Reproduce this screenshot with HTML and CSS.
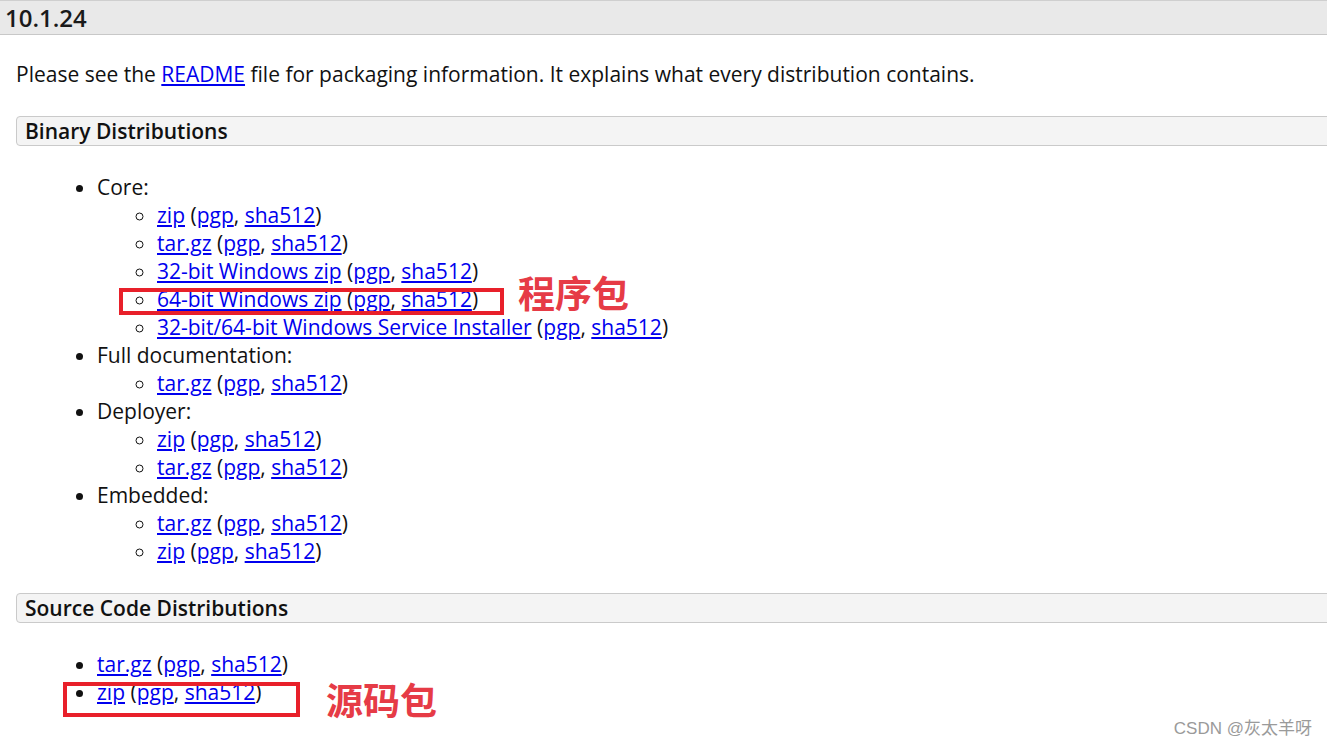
FILE: index.html
```html
<!DOCTYPE html>
<html lang="en">
<head>
    <meta charset="UTF-8">
    <title>Tomcat 10.1.24</title>
    <link rel="stylesheet" href="styles.css">
</head>
<body>
    <h2 class="version">10.1.24</h2>

    <div class="page">
        <p class="intro">Please see the <a href="#">README</a> file for packaging information. It explains what every distribution contains.</p>

        <h3 class="box">Binary Distributions</h3>
        <ul class="dist">
            <li>Core:
                <ul>
                    <li><a href="#">zip</a> (<a href="#">pgp</a>, <a href="#">sha512</a>)</li>
                    <li><a href="#">tar.gz</a> (<a href="#">pgp</a>, <a href="#">sha512</a>)</li>
                    <li><a href="#">32-bit Windows zip</a> (<a href="#">pgp</a>, <a href="#">sha512</a>)</li>
                    <li><a href="#">64-bit Windows zip</a> (<a href="#">pgp</a>, <a href="#">sha512</a>)</li>
                    <li><a href="#">32-bit/64-bit Windows Service Installer</a> (<a href="#">pgp</a>, <a href="#">sha512</a>)</li>
                </ul>
            </li>
            <li>Full documentation:
                <ul>
                    <li><a href="#">tar.gz</a> (<a href="#">pgp</a>, <a href="#">sha512</a>)</li>
                </ul>
            </li>
            <li>Deployer:
                <ul>
                    <li><a href="#">zip</a> (<a href="#">pgp</a>, <a href="#">sha512</a>)</li>
                    <li><a href="#">tar.gz</a> (<a href="#">pgp</a>, <a href="#">sha512</a>)</li>
                </ul>
            </li>
            <li>Embedded:
                <ul>
                    <li><a href="#">tar.gz</a> (<a href="#">pgp</a>, <a href="#">sha512</a>)</li>
                    <li><a href="#">zip</a> (<a href="#">pgp</a>, <a href="#">sha512</a>)</li>
                </ul>
            </li>
        </ul>

        <h3 class="box">Source Code Distributions</h3>
        <ul class="dist">
            <li><a href="#">tar.gz</a> (<a href="#">pgp</a>, <a href="#">sha512</a>)</li>
            <li><a href="#">zip</a> (<a href="#">pgp</a>, <a href="#">sha512</a>)</li>
        </ul>
    </div>

    <!-- screenshot annotations -->
    <div class="mark mark-bin"></div>
    <div class="note note-bin">程序包</div>
    <div class="mark mark-src"></div>
    <div class="note note-src">源码包</div>

    <div class="watermark">CSDN @灰太羊呀</div>
</body>
</html>
```

FILE: styles.css
```css
* {
    box-sizing: border-box;
}

body {
    margin: 0;
    background: #fff;
    color: #111;
    font-family: 'Open Sans', 'Noto Sans', 'Noto Sans CJK SC', sans-serif;
    font-size: 21px;
    line-height: 28px;
    position: relative;
    height: 747px;
    overflow: hidden;
}

a {
    color: #0000ee;
    text-decoration: underline;
}

.version {
    margin: 0;
    height: 35px;
    padding: 0 5px;
    background: #e9e9e9;
    border-top: 1px solid #cfcfcf;
    border-bottom: 1px solid #c8c8c8;
    font-size: 24px;
    font-weight: 600;
    line-height: 34px;
    color: #1a1a1a;
}

.page {
    padding-left: 16px;
}

.intro {
    margin: 25px 0 28px;
}

.box {
    margin: 0 -12px 0 0;
    height: 30px;
    padding: 0 8px;
    background: #f4f4f4;
    border: 1px solid #cacaca;
    border-radius: 4px;
    font-size: 21px;
    font-weight: 600;
    line-height: 28px;
}

.dist {
    margin: 27px 0 28px;
    padding-left: 81px;
    list-style: disc;
}

.dist ul {
    margin: 0;
    padding-left: 60px;
    list-style: circle;
}

.mark {
    position: absolute;
    border: 4px solid #e8202a;
}

.mark-bin {
    left: 119px;
    top: 288px;
    width: 385px;
    height: 27px;
}

.mark-src {
    left: 63px;
    top: 682px;
    width: 237px;
    height: 35px;
}

.note {
    position: absolute;
    color: #e63b46;
    font-family: 'Noto Sans CJK SC', sans-serif;
    font-size: 37px;
    font-weight: 700;
    line-height: 37px;
}

.note-bin {
    left: 518px;
    top: 274px;
}

.note-src {
    left: 326px;
    top: 681px;
}

.watermark {
    position: absolute;
    right: 15px;
    top: 718px;
    color: #9a9a9a;
    font-family: 'Liberation Sans', 'Noto Sans CJK SC', sans-serif;
    font-size: 17px;
    line-height: 22px;
}
```
